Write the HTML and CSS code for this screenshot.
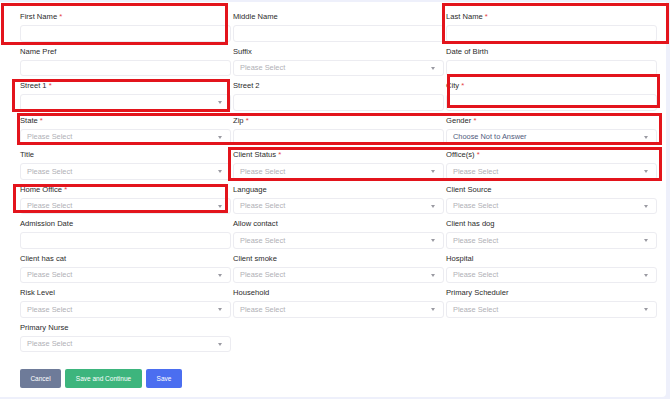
FILE: index.html
```html
<!DOCTYPE html>
<html lang="en">
<head>
    <meta charset="UTF-8">
    <meta name="viewport" content="width=device-width, initial-scale=1.0">
    <title>Client Intake</title>
    <link rel="stylesheet" href="styles.css">
</head>
<body>
    <div id="card">
        <form class="form-grid">
            <div class="field">
                <label>First Name <span class="req">*</span></label>
                <input type="text">
            </div>
            <div class="field">
                <label>Middle Name</label>
                <input type="text">
            </div>
            <div class="field">
                <label>Last Name <span class="req">*</span></label>
                <input type="text">
            </div>

            <div class="field">
                <label>Name Pref</label>
                <input type="text">
            </div>
            <div class="field">
                <label>Suffix</label>
                <div class="select">Please Select</div>
            </div>
            <div class="field">
                <label>Date of Birth</label>
                <input type="text">
            </div>

            <div class="field">
                <label>Street 1 <span class="req">*</span></label>
                <div class="select"></div>
            </div>
            <div class="field">
                <label>Street 2</label>
                <input type="text">
            </div>
            <div class="field">
                <label>City <span class="req">*</span></label>
                <input type="text">
            </div>

            <div class="field">
                <label>State <span class="req">*</span></label>
                <div class="select">Please Select</div>
            </div>
            <div class="field">
                <label>Zip <span class="req">*</span></label>
                <input type="text">
            </div>
            <div class="field">
                <label>Gender <span class="req">*</span></label>
                <div class="select chosen">Choose Not to Answer</div>
            </div>

            <div class="field">
                <label>Title</label>
                <div class="select">Please Select</div>
            </div>
            <div class="field">
                <label>Client Status <span class="req">*</span></label>
                <div class="select">Please Select</div>
            </div>
            <div class="field">
                <label>Office(s) <span class="req">*</span></label>
                <div class="select">Please Select</div>
            </div>

            <div class="field">
                <label>Home Office <span class="req">*</span></label>
                <div class="select">Please Select</div>
            </div>
            <div class="field">
                <label>Language</label>
                <div class="select">Please Select</div>
            </div>
            <div class="field">
                <label>Client Source</label>
                <div class="select">Please Select</div>
            </div>

            <div class="field">
                <label>Admission Date</label>
                <input type="text">
            </div>
            <div class="field">
                <label>Allow contact</label>
                <div class="select">Please Select</div>
            </div>
            <div class="field">
                <label>Client has dog</label>
                <div class="select">Please Select</div>
            </div>

            <div class="field">
                <label>Client has cat</label>
                <div class="select">Please Select</div>
            </div>
            <div class="field">
                <label>Client smoke</label>
                <div class="select">Please Select</div>
            </div>
            <div class="field">
                <label>Hospital</label>
                <div class="select">Please Select</div>
            </div>

            <div class="field">
                <label>Risk Level</label>
                <div class="select">Please Select</div>
            </div>
            <div class="field">
                <label>Household</label>
                <div class="select">Please Select</div>
            </div>
            <div class="field">
                <label>Primary Scheduler</label>
                <div class="select">Please Select</div>
            </div>

            <div class="field">
                <label>Primary Nurse</label>
                <div class="select">Please Select</div>
            </div>
        </form>

        <div class="actions">
            <button type="button" class="btn btn-cancel">Cancel</button>
            <button type="button" class="btn btn-continue">Save and Continue</button>
            <button type="button" class="btn btn-save">Save</button>
        </div>

        <!-- review marks drawn over the form -->
        <div class="mark mark-first"></div>
        <div class="mark mark-last"></div>
        <div class="mark mark-street"></div>
        <div class="mark mark-city"></div>
        <div class="mark mark-state"></div>
        <div class="mark mark-status"></div>
        <div class="mark mark-home"></div>
    </div>
</body>
</html>
```

FILE: styles.css
```css
body {
    font-family: 'Liberation Sans', Arial, sans-serif;
    background-color: #eef0fb;
    margin: 0;
    padding: 0;
}

#card {
    position: relative;
    width: 666px;
    margin-top: 2px;
    background-color: #fff;
    border-radius: 0 0 4px 0;
    padding: 9px 9px 9px 20px;
    box-sizing: border-box;
}

.form-grid {
    display: grid;
    grid-template-columns: repeat(3, 211px);
    column-gap: 2px;
    margin: 0;
}

.field {
    display: flex;
    flex-direction: column;
    height: 34.5px;
}

.field label {
    font-size: 7.6px;
    line-height: 10px;
    height: 10px;
    color: #2b2b2b;
    padding-top: 1px;
    margin-bottom: 3px;
}

.req {
    color: #e53e3e;
}

.field input,
.select {
    height: 16.5px;
    box-sizing: border-box;
    border: 1px solid #ececf1;
    border-radius: 3px;
    background-color: #fff;
    margin: 0;
    padding: 0 6px;
    font-family: inherit;
    font-size: 7.4px;
}

.select {
    position: relative;
    display: flex;
    align-items: center;
    color: #b0b0b6;
}

.select::after {
    content: '';
    position: absolute;
    right: 8px;
    top: 6px;
    border-left: 2.5px solid transparent;
    border-right: 2.5px solid transparent;
    border-top: 3px solid #9a9aa2;
}

.select.chosen {
    color: #515a7c;
}

.actions {
    display: flex;
    gap: 4px;
    margin-top: 13px;
}

.btn {
    height: 19px;
    border: none;
    border-radius: 2px;
    color: #fff;
    font-family: inherit;
    font-size: 6.5px;
    padding: 0;
    cursor: pointer;
}

.btn-cancel {
    width: 41px;
    background-color: #6e7b99;
}

.btn-continue {
    width: 77px;
    background-color: #3db57d;
}

.btn-save {
    width: 36px;
    background-color: #4b6ef0;
}

.mark {
    position: absolute;
    border: 3px solid #e3141c;
    box-sizing: border-box;
    pointer-events: none;
}

/* card starts at y=2, so tops are page y minus 2 */
.mark-first  { left: 1px;   top: 1px;   width: 227px; height: 42px; }
.mark-last   { left: 442px; top: 1px;   width: 227px; height: 41px; }
.mark-street { left: 12px;  top: 77px;  width: 218px; height: 33px; }
.mark-city   { left: 447px; top: 72px;  width: 213px; height: 34px; }
.mark-state  { left: 17px;  top: 111px; width: 645px; height: 32px; }
.mark-status { left: 228px; top: 145px; width: 434px; height: 34px; }
.mark-home   { left: 13px;  top: 182px; width: 215px; height: 29px; }
```
